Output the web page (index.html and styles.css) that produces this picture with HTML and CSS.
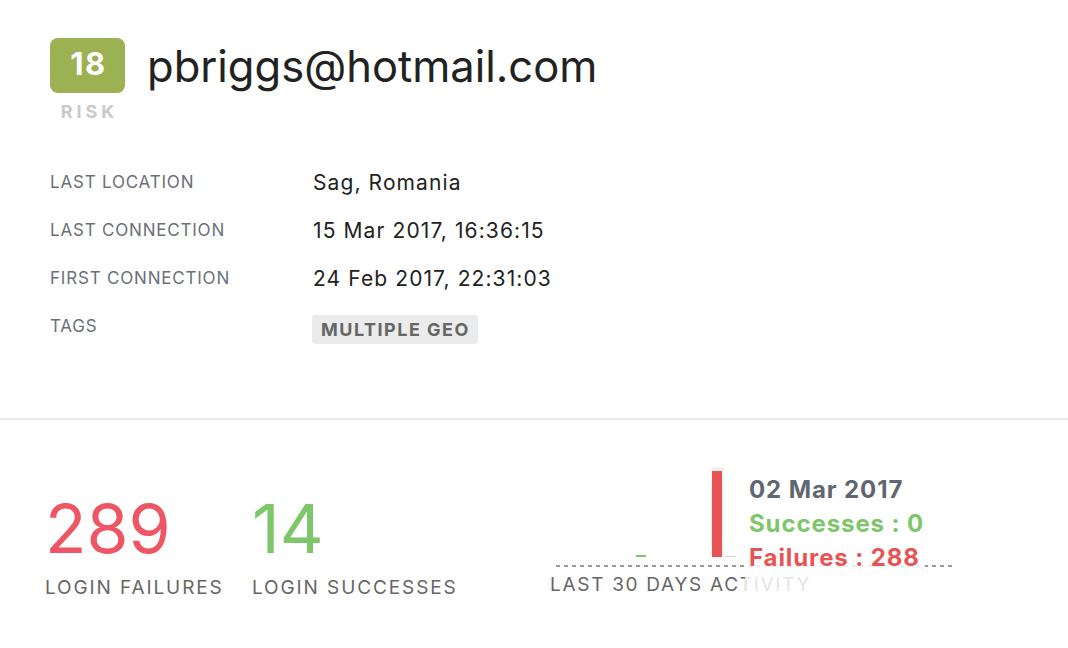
FILE: index.html
```html
<!DOCTYPE html>
<html>
<head>
<meta charset="utf-8">
<link rel="stylesheet" href="styles.css">
</head>
<body>
<div class="page">
  <section class="profile">
    <header class="head">
      <div class="risk">
        <div class="risk-badge">18</div>
        <div class="risk-label">RISK</div>
      </div>
      <h1 class="email">pbriggs@hotmail.com</h1>
    </header>
    <dl class="info">
      <dt>LAST LOCATION</dt><dd>Sag, Romania</dd>
      <dt>LAST CONNECTION</dt><dd>15 Mar 2017, 16:36:15</dd>
      <dt>FIRST CONNECTION</dt><dd>24 Feb 2017, 22:31:03</dd>
      <dt>TAGS</dt><dd><span class="tag">MULTIPLE GEO</span></dd>
    </dl>
  </section>
  <section class="stats">
    <div class="stat">
      <div class="num fail">289</div>
      <div class="stat-label">LOGIN FAILURES</div>
    </div>
    <div class="stat">
      <div class="num ok">14</div>
      <div class="stat-label">LOGIN SUCCESSES</div>
    </div>
    <div class="activity">
      <div class="chart">
        <div class="bar bar-green" style="left:86px;height:2px"></div>
        <div class="hover-col"></div>
        <div class="bar bar-red" style="left:162px;height:86px"></div>
        <div class="bar bar-pink" style="left:175px;height:1px"></div>
        <div class="baseline"></div>
        <div class="tooltip">
          <div class="tt-date">02 Mar 2017</div>
          <div class="tt-ok">Successes : 0</div>
          <div class="tt-fail">Failures : 288</div>
        </div>
      </div>
      <div class="activity-label">LAST 30 DAYS ACTIVITY</div>
    </div>
  </section>
</div>
</body>
</html>
```
FILE: styles.css
```css
* { box-sizing: border-box; }
html, body { margin: 0; padding: 0; background: #fff; }
body {
  font-family: "Inter", "Lato", sans-serif;
  color: #222;
  width: 1068px;
  height: 648px;
  overflow: hidden;
}
.profile {
  padding: 38px 0 0 50px;
  height: 420px;
  border-bottom: 2px solid #e8e8e8;
}
.head {
  display: flex;
  align-items: flex-start;
  gap: 22px;
}
.risk {
  display: flex;
  flex-direction: column;
  align-items: center;
  width: 75px;
}
.risk-badge {
  width: 75px;
  height: 55px;
  border-radius: 8px;
  background: #9bb152;
  color: #fff;
  font-weight: 700;
  font-size: 31px;
  letter-spacing: 1.5px;
  padding: 0 0 5px 2px;
  display: flex;
  align-items: center;
  justify-content: center;
}
.risk-label {
  margin-top: 8px;
  font-size: 18px;
  font-weight: 700;
  letter-spacing: 4px;
  color: #c9c9c9;
  padding-left: 4px;
}
.email {
  margin: 0;
  font-weight: 400;
  font-size: 43.5px;
  line-height: 56px;
  color: #222;
}
.info {
  margin: 47px 0 0 0;
  display: grid;
  grid-template-columns: 263px auto;
  grid-auto-rows: 48px;
  align-items: start;
}
.info dt {
  font-size: 17px;
  letter-spacing: 0.8px;
  color: #6b7079;
  line-height: 24px;
  margin-top: 1px;
}
.info dd {
  margin: 0;
  font-size: 21px;
  letter-spacing: 1.1px;
  line-height: 28px;
  color: #222;
}
.tag {
  display: inline-block;
  background: #ebebeb;
  color: #666;
  font-weight: 700;
  font-size: 18px;
  letter-spacing: 1.5px;
  line-height: 29px;
  padding: 0 8px 0 9px;
  border-radius: 3px;
  margin-left: -1px;
  margin-top: 2px;
}
.stats {
  display: grid;
  grid-template-columns: 207px 298px auto;
  align-items: start;
  padding: 68px 0 0 45px;
}
.stat {
  display: flex;
  flex-direction: column;
}
.num {
  font-size: 68px;
  line-height: 80px;
  font-weight: 400;
}
.num.fail { color: #ee5565; }
.num.ok { color: #7ec66a; }
.stat-label {
  font-size: 19px;
  letter-spacing: 1.9px;
  color: #666;
  margin-top: 8px;
}
.activity {
  margin-top: -26px;
  width: 405px;
}
.chart {
  position: relative;
  height: 105px;
}
.baseline {
  position: absolute;
  left: 6px;
  right: 0;
  bottom: 0;
  height: 2px;
  background-image: linear-gradient(to right, #9a9a9a 0 4px, transparent 4px 8px);
  background-size: 8px 2px;
}
.bar {
  position: absolute;
  bottom: 10px;
  width: 10px;
}
.bar-green { background: #7ec66a; }
.bar-red { background: #e85454; }
.bar-pink { background: #f6cccc; width: 11px; }
.hover-col {
  position: absolute;
  left: 161px;
  width: 13px;
  bottom: 10px;
  height: 90px;
  background: #f3f3f3;
}
.tooltip {
  position: absolute;
  left: 195px;
  top: 0;
  width: 180px;
  height: 140px;
  background: rgba(255,255,255,0.82);
  padding: 11px 0 0 4px;
  font-weight: 700;
  font-size: 24px;
  letter-spacing: 0.9px;
  line-height: 34px;
  z-index: 2;
}
.tt-date { color: #5f6670; }
.tt-ok { color: #7ec66a; }
.tt-fail { color: #e85454; }
.activity-label {
  font-size: 19px;
  letter-spacing: 1.7px;
  color: #666;
  margin-top: 6px;
}
```
